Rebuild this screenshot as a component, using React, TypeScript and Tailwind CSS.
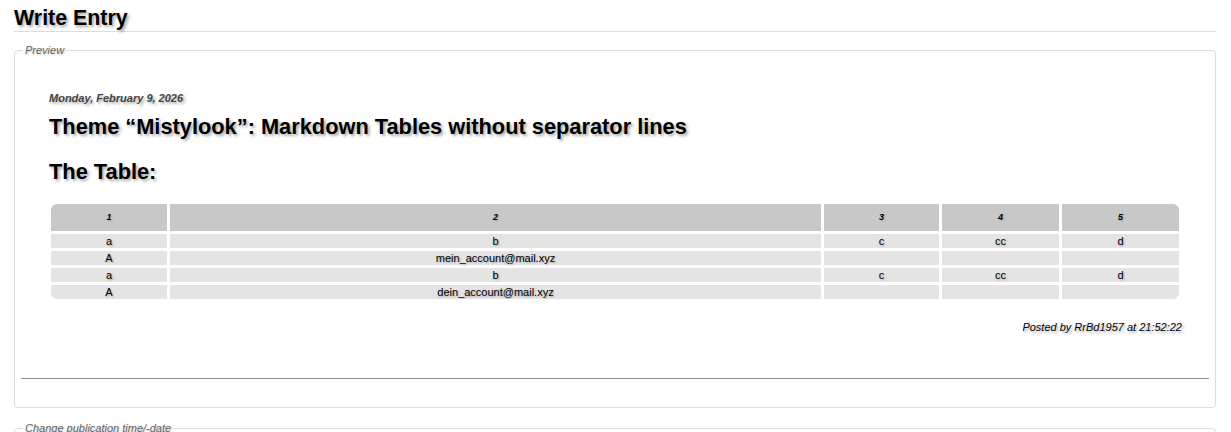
import React from "react";

const sh = "[text-shadow:2px_2px_3px_#a8a8a8]";

const header = ["1", "2", "3", "4", "5"];
const rows = [
  ["a", "b", "c", "cc", "d"],
  ["A", "mein_account@mail.xyz", "", "", ""],
  ["a", "b", "c", "cc", "d"],
  ["A", "dein_account@mail.xyz", "", "", ""],
];

export default function App() {
  return (
    <div className="w-[1231px] h-[432px] overflow-hidden bg-white font-['Liberation_Sans',Arial,sans-serif] text-black">
      <div className="pl-[14px] pr-[15px]">
        <h1 className={`text-[21.4px] leading-[24px] font-bold pt-[6px] pb-[1px] border-b border-[#dcdcdc] ${sh}`}>
          Write Entry
        </h1>

        <fieldset className="mt-[12px] w-[1202px] border border-[#dcdcdc] rounded-[4px] px-[6px] pb-[28px]">
          <legend className="ml-[2px] px-[2px] text-[11px] leading-[13px] italic text-[#666] [text-shadow:1px_1px_2px_#c4c4c4]">
            Preview
          </legend>
          <div className="pl-[28px] pr-[27px] pt-[35px]">
            <div className={`text-[11px] leading-[13px] italic font-bold text-[#444] ${sh}`}>
              Monday, February 9, 2026
            </div>
            <h2 className={`mt-[10px] text-[21.8px] leading-[24px] font-bold ${sh}`}>
              Theme “Mistylook”: Markdown Tables without separator lines
            </h2>
            <h3 className={`mt-[21px] text-[21.8px] leading-[24px] font-bold ${sh}`}>The Table:</h3>
            <div className="mt-[20px] ml-[2px] mr-[3px] rounded-[6px] overflow-hidden grid grid-cols-[116px_651px_115px_117px_117px] gap-[3px]">
              {header.map((h) => (
                <div
                  key={h}
                  className="h-[27px] bg-[#c8c8c8] flex items-center justify-center text-[9px] italic font-bold [text-shadow:1px_1px_2px_#a0a0a0]"
                >
                  {h}
                </div>
              ))}
              {rows.map((r, i) =>
                r.map((c, j) => (
                  <div
                    key={`${i}-${j}`}
                    className="h-[14px] bg-[#e4e4e4] flex items-center justify-center text-[11px] leading-[15px] [text-shadow:1px_1px_2px_#a0a0a0]"
                  >
                    {c}
                  </div>
                ))
              )}
            </div>
            <div className={`mt-[22px] text-right text-[11px] leading-[13px] italic ${sh}`}>
              Posted by RrBd1957 at 21:52:22
            </div>
          </div>
          <div className="mt-[44px] h-px bg-[#8c8c8c]" />
        </fieldset>

        <fieldset className="mt-[14px] w-[1202px] h-[40px] border border-[#dcdcdc] rounded-[4px] px-[6px]">
          <legend className="ml-[2px] px-[2px] text-[11px] leading-[13px] italic text-[#666] [text-shadow:1px_1px_2px_#c4c4c4]">
            Change publication time/-date
          </legend>
        </fieldset>
      </div>
    </div>
  );
}
